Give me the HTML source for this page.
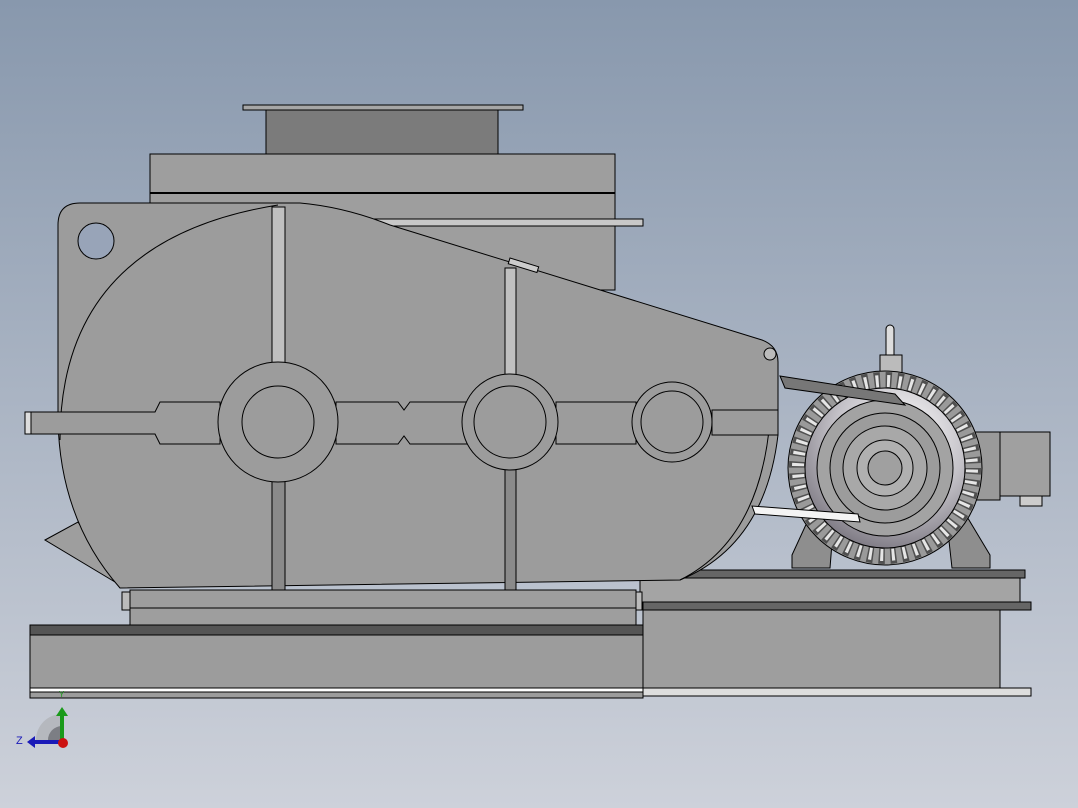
<!DOCTYPE html>
<html><head><style>html,body{margin:0;padding:0;width:1078px;height:808px;overflow:hidden}</style></head>
<body>
<svg width="1078" height="808" viewBox="0 0 1078 808" xmlns="http://www.w3.org/2000/svg" stroke="#000" stroke-width="1">
<defs>
<linearGradient id="bg" x1="0" y1="0" x2="0" y2="1">
<stop offset="0" stop-color="#8898ad"/><stop offset="1" stop-color="#cdd1da"/>
</linearGradient>
<radialGradient id="mb" cx="0.6" cy="0.3" r="0.75">
<stop offset="0" stop-color="#ffffff"/><stop offset="0.55" stop-color="#c4c2c8"/><stop offset="1" stop-color="#7a7680"/>
</radialGradient>
</defs>
<rect width="1078" height="808" fill="url(#bg)" stroke="none"/>
<rect x="243" y="105" width="280" height="5" fill="#a6a6a6"/>
<rect x="266" y="110" width="232" height="44" fill="#7b7b7b"/>
<rect x="150" y="154" width="465" height="136" fill="#9e9e9e"/>
<line x1="150" y1="193" x2="615" y2="193" stroke-width="2"/>
<rect x="370" y="219" width="273" height="7" fill="#c8c8c8"/>
<rect x="30" y="625" width="613" height="73" fill="#9c9c9c"/>
<rect x="30" y="625" width="613" height="10" fill="#555"/>
<rect x="30" y="688" width="613" height="4" fill="#fff"/>
<rect x="643" y="605" width="357" height="85" fill="#9e9e9e"/>
<rect x="643" y="602" width="388" height="8" fill="#666"/>
<rect x="643" y="688" width="388" height="8" fill="#ddd"/>
<rect x="640" y="570" width="385" height="8" fill="#666"/>
<rect x="640" y="578" width="380" height="24" fill="#a4a4a4"/>
<path d="M45,540 L78,522 L120,585 Z" fill="#9e9e9e"/>
<rect x="130" y="590" width="506" height="35" fill="#9e9e9e"/>
<line x1="130" y1="608" x2="636" y2="608"/>
<rect x="122" y="592" width="8" height="18" fill="#bbb"/>
<rect x="636" y="592" width="6" height="18" fill="#bbb"/>
<path d="M80,203 L300,203 Q345,207 390,225 L762,340 Q778,346 778,362 L778,435 Q765,545 680,580 L120,588 Q60,520 58,420 L58,225 Q58,203 80,203 Z" fill="#9c9c9c"/>
<path d="M60,440 Q60,240 278,205" fill="none"/>
<path d="M680,580 Q760,540 770,420" fill="none"/>
<circle cx="96" cy="241" r="18" fill="#98a4b8"/>
<circle cx="770" cy="354" r="6" fill="#bbb"/>
<rect x="510" y="258" width="30" height="6" fill="#ccc" transform="rotate(17 510 258)"/>
<path d="M25,412 L155,412 L160,402 L220,402 L220,444 L160,444 L155,434 L25,434 Z" fill="#9c9c9c"/>
<rect x="25" y="412" width="6" height="22" fill="#ddd"/>
<path d="M336,402 L398,402 L404,410 L410,402 L470,402 L470,444 L410,444 L404,436 L398,444 L336,444 Z" fill="#9c9c9c"/>
<rect x="556" y="402" width="80" height="42" fill="#9c9c9c"/>
<rect x="712" y="410" width="66" height="25" fill="#9c9c9c"/>
<rect x="272" y="207" width="13" height="156" fill="#c0c0c0"/>
<rect x="272" y="481" width="13" height="109" fill="#8a8a8a"/>
<rect x="505" y="268" width="11" height="108" fill="#c0c0c0"/>
<rect x="505" y="468" width="11" height="122" fill="#8a8a8a"/>
<circle cx="278" cy="422" r="60" fill="#9c9c9c"/><circle cx="278" cy="422" r="36" fill="#9c9c9c"/>
<circle cx="510" cy="422" r="48" fill="#9c9c9c"/><circle cx="510" cy="422" r="36" fill="#9c9c9c"/>
<circle cx="672" cy="422" r="40" fill="#9c9c9c"/><circle cx="672" cy="422" r="31" fill="#9c9c9c"/>
<path d="M792,568 L792,555 L815,505 L835,505 L830,568 Z" fill="#8e8e8e"/>
<path d="M990,568 L990,555 L960,505 L945,505 L952,568 Z" fill="#8e8e8e"/>
<rect x="985" y="432" width="65" height="64" fill="#a0a0a0"/>
<rect x="1020" y="496" width="22" height="10" fill="#ccc"/>
<rect x="975" y="432" width="25" height="68" fill="#9a9a9a"/>
<rect x="886" y="325" width="8" height="35" rx="4" fill="#ddd"/>
<rect x="880" y="355" width="22" height="18" fill="#bbb"/>
<circle cx="885" cy="468" r="97" fill="#9a9a9a"/>
<circle cx="885" cy="468" r="87" fill="none" stroke="#505050" stroke-width="18" stroke-dasharray="6 5.4"/>
<circle cx="885" cy="468" r="87" fill="none" stroke="#e6e6e6" stroke-width="12" stroke-dasharray="3 8.4" stroke-dashoffset="-1.5"/>
<circle cx="885" cy="468" r="80" fill="url(#mb)"/>
<circle cx="885" cy="468" r="68" fill="#a3a3a3"/>
<circle cx="885" cy="468" r="55" fill="#9c9c9c"/>
<circle cx="885" cy="468" r="42" fill="#a8a8a8"/>
<circle cx="885" cy="468" r="28" fill="#b0b0b0"/>
<circle cx="885" cy="468" r="17" fill="#a0a0a0"/>
<path d="M780,376 L785,388 L905,405 L895,394 Z" fill="#777"/>
<path d="M752,506 L755,514 L860,522 L858,514 Z" fill="#f4f4f4"/>
<g stroke="none">
<path d="M36,740 A26,26 0 0 1 62,714 L62,740 Z" fill="#b5b8be"/>
<path d="M48,740 A14,14 0 0 1 62,726 L62,740 Z" fill="#7c7e84"/>
<rect x="60" y="716" width="4" height="26" fill="#1a9a1a"/>
<path d="M56,716 L62,707 L68,716 Z" fill="#1a9a1a"/>
<rect x="34" y="740" width="28" height="4" fill="#1a1ab8"/>
<path d="M35,736 L27,742 L35,748 Z" fill="#1a1ab8"/>
<circle cx="63" cy="743" r="5" fill="#cc1111"/>
</g>
<text x="16" y="744" font-family="Liberation Sans, sans-serif" font-size="11" fill="#1a1ab8" stroke="none">Z</text>
<text x="59" y="697" font-family="Liberation Sans, sans-serif" font-size="8" fill="#1a9a1a" stroke="none">Y</text>
</svg>
</body></html>
